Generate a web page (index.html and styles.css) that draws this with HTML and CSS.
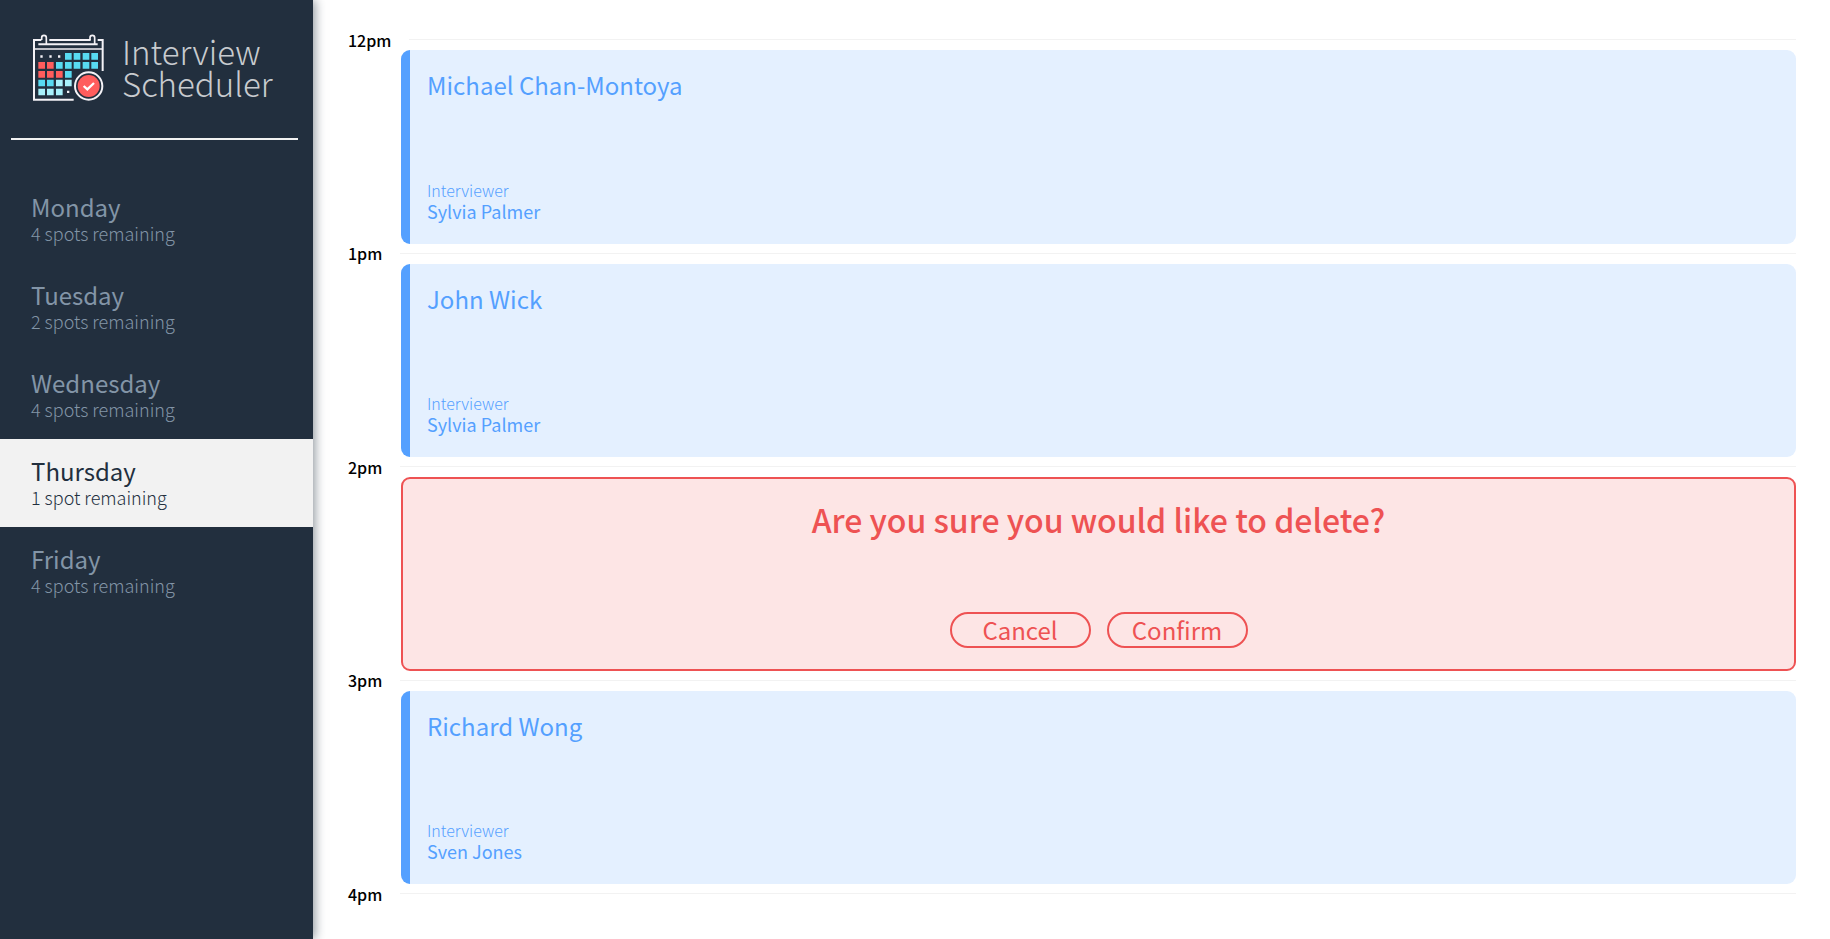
FILE: index.html
```html
<!DOCTYPE html>
<html lang="en">
<head>
<meta charset="utf-8">
<meta name="viewport" content="width=device-width, initial-scale=1">
<title>Interview Scheduler</title>
<link rel="stylesheet" href="styles.css">
</head>
<body>
<div class="layout">
  <aside class="sidebar">
    <div class="logo">
      <svg class="logo-icon" viewBox="0 0 213 201" aria-hidden="true">
        <g fill="none" stroke="#f4f2f6" stroke-width="6">
          <path d="M122 197H3V18H25M49 18H173M194 18H209V111M16 31H194"/>
          <path d="M4 45H208" stroke-width="5"/>
          <path d="M26 18V11a7 7 0 0 1 14 0V31M171 18V11a7 7 0 0 1 14 0V31" stroke-width="5"/>
        </g>
        <g fill="#f4f2f6"><path d="M22 64h7v7h-7zM49 64h7v7h-7zM75 64h7v7h-7zM102 170h7v7h-7z"/></g>
        <path fill="#58dbf2" d="M96 57h20v20H96zM122 57h20v20h-20zM149 57h20v20h-20zM175 57h20v20h-20zM69 84h20v20H69zM96 84h20v20H96zM122 84h20v20h-20zM149 84h20v20h-20zM175 84h20v20h-20zM96 111h20v20H96zM16 137h20v20H16zM42 137h20v20H42z"/>
        <path fill="#a8f1fb" d="M69 137h20v20H69zM96 137h20v20H96zM16 164h20v20H16zM42 164h20v20H42zM69 164h20v20H69z"/>
        <path fill="#ff5d5d" d="M16 84h20v20H16zM42 84h20v20H42zM16 111h20v20H16zM42 111h20v20H42zM69 111h20v20H69z"/>
        <circle cx="167" cy="156" r="48" fill="#222f3e"/>
        <circle cx="167" cy="156" r="41" fill="none" stroke="#f4f2f6" stroke-width="6"/>
        <circle cx="167" cy="156" r="33" fill="#ff5d5d"/>
        <path d="M152 156L163 166L183 147" fill="none" stroke="#fff" stroke-width="7"/>
      </svg>
      <div class="logo-text">Interview<br>Scheduler</div>
    </div>
    <hr class="separator">
    <nav class="days">
      <button class="day"><span class="day-name">Monday</span><span class="day-spots">4 spots remaining</span></button>
      <button class="day"><span class="day-name">Tuesday</span><span class="day-spots">2 spots remaining</span></button>
      <button class="day"><span class="day-name">Wednesday</span><span class="day-spots">4 spots remaining</span></button>
      <button class="day selected" aria-current="true"><span class="day-name">Thursday</span><span class="day-spots">1 spot remaining</span></button>
      <button class="day"><span class="day-name">Friday</span><span class="day-spots">4 spots remaining</span></button>
    </nav>
  </aside>
  <main class="schedule">
    <article class="appointment">
      <header class="time"><h4>12pm</h4><hr></header>
      <section class="card"><h2>Michael Chan-Montoya</h2><div><h4>Interviewer</h4><h3>Sylvia Palmer</h3></div></section>
    </article>
    <article class="appointment">
      <header class="time"><h4>1pm</h4><hr></header>
      <section class="card"><h2>John Wick</h2><div><h4>Interviewer</h4><h3>Sylvia Palmer</h3></div></section>
    </article>
    <article class="appointment">
      <header class="time"><h4>2pm</h4><hr></header>
      <section class="confirm">
        <h1>Are you sure you would like to delete?</h1>
        <div class="actions"><button>Cancel</button><button>Confirm</button></div>
      </section>
    </article>
    <article class="appointment">
      <header class="time"><h4>3pm</h4><hr></header>
      <section class="card"><h2>Richard Wong</h2><div><h4>Interviewer</h4><h3>Sven Jones</h3></div></section>
    </article>
    <article class="appointment">
      <header class="time"><h4>4pm</h4><hr></header>
    </article>
  </main>
</div>
</body>
</html>
```
FILE: styles.css
```css
* { box-sizing: border-box; margin: 0; }

body, button {
  font-family: "Source Sans Pro", "Noto Sans CJK JP", sans-serif;
}

.layout {
  display: flex;
  min-height: 100vh;
  background: #fff;
}

.sidebar {
  flex: none;
  width: 313px;
  background: #222f3e;
  box-shadow: 2px 0 10px rgba(34, 47, 62, 0.5);
}

.logo {
  display: flex;
  gap: 18px;
  padding: 34px 24px 0 33px;
}

.logo-icon { width: 71px; height: 67px; flex: none; }

.logo-text {
  padding-top: 1px;
  font-size: 33px;
  font-weight: 300;
  line-height: 32px;
  color: #c8cbcf;
}

.separator {
  height: 2px;
  margin: 37px 15px 35px 11px;
  border: 0;
  background: #f2f2f2;
}

.day {
  display: flex;
  flex-direction: column;
  justify-content: center;
  width: 100%;
  height: 88px;
  padding: 0 31px;
  border: 0;
  background: none;
  color: #8395a7;
  text-align: left;
}

.day-name { font-size: 24px; line-height: 28px; }
.day-spots { font-size: 18px; line-height: 24px; font-weight: 300; }

.selected { background: #f2f2f2; color: #222f3e; }

.schedule {
  flex: 1;
  display: grid;
  grid-template-rows: repeat(4, 1fr) auto;
  padding: 30px 34px 35px;
}

.appointment { display: flex; flex-direction: column; }

.time {
  display: flex;
  align-items: center;
  gap: 18px;
  height: 20px;
  padding: 0 0 1px 1px;
}

.time h4 { font-size: 16px; line-height: 20px; font-weight: 500; color: #000; }
.time hr { flex: 1; height: 1px; border: 0; background: #f2f2f2; }

.card, .confirm {
  flex: 1;
  display: flex;
  flex-direction: column;
  justify-content: space-between;
  margin-left: 54px;
  border-radius: 9px;
}

.card {
  padding: 19px 17px 22px;
  border-left: 9px solid #54a0ff;
  background: #e4f0ff;
  color: #54a0ff;
}

.card h2 { font-size: 24px; line-height: 32px; font-weight: 400; }
.card h3 { font-size: 18px; line-height: 22px; font-weight: 400; }
.card h4 { font-size: 16px; line-height: 20px; font-weight: 300; }

.confirm {
  align-items: center;
  padding: 18px 20px 21px;
  border: 2px solid #ee5253;
  background: #fde5e5;
  color: #ee5253;
}

.confirm h1 { font-size: 32px; line-height: 44px; font-weight: 500; }

.actions { display: flex; gap: 16px; }

.actions button {
  width: 141px;
  height: 36px;
  padding: 0;
  border: 2px solid #ee5253;
  border-radius: 18px;
  background: none;
  color: #ee5253;
  font-size: 24px;
  line-height: 32px;
}
```
